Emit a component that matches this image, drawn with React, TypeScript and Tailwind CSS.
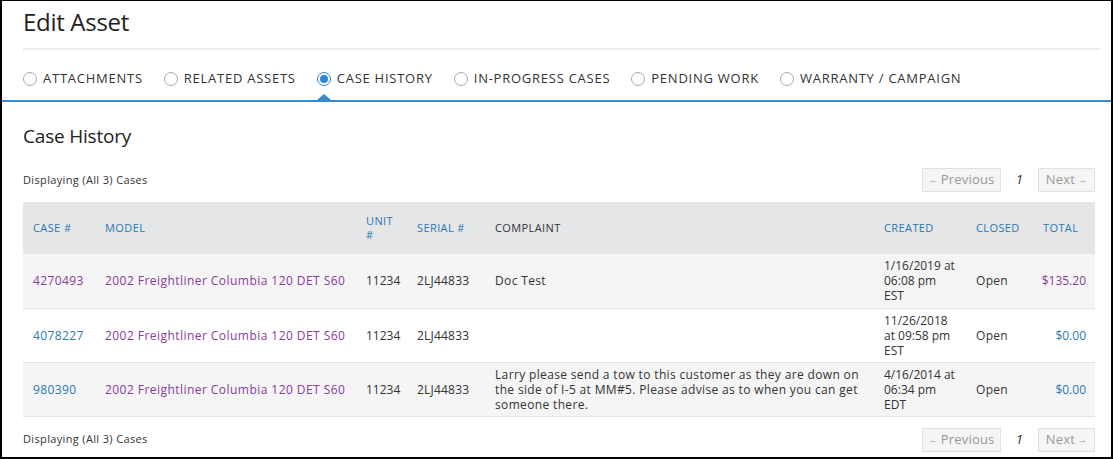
import React from "react";

const font = { fontFamily: '"Open Sans", "Noto Sans", sans-serif' };

function Radio({ checked }: { checked?: boolean }) {
  return checked ? (
    <span className="inline-flex h-[14px] w-[14px] items-center justify-center rounded-full border border-[#2d86d6] bg-white">
      <span className="h-[8px] w-[8px] rounded-full bg-[#2d86d6]" />
    </span>
  ) : (
    <span className="inline-block h-[14px] w-[14px] rounded-full border border-[#a9a9a9] bg-white" />
  );
}

function Pager() {
  return (
    <div className="flex items-center text-[13px] tracking-[0.2px]">
      <div className="flex h-[24px] w-[79px] items-center justify-center border border-[#e2e2e2] bg-[#f5f5f5] text-[#999]">
        <span className="mr-[3px] text-[9px]">←</span>Previous
      </div>
      <div className="w-[37px] text-center italic text-[#333]">1</div>
      <div className="flex h-[24px] w-[57px] items-center justify-center border border-[#e2e2e2] bg-[#f5f5f5] text-[#999]">
        Next<span className="ml-[3px] text-[9px]">→</span>
      </div>
    </div>
  );
}

const tabs = [
  "ATTACHMENTS",
  "RELATED ASSETS",
  "CASE HISTORY",
  "IN-PROGRESS CASES",
  "PENDING WORK",
  "WARRANTY / CAMPAIGN",
];

type Row = {
  caseNo: string;
  caseVisited: boolean;
  model: string;
  unit: string;
  serial: string;
  complaint: string[];
  created: string[];
  closed: string;
  total: string;
  totalVisited: boolean;
  bg: string;
};

const rows: Row[] = [
  {
    caseNo: "4270493",
    caseVisited: true,
    model: "2002 Freightliner Columbia 120 DET S60",
    unit: "11234",
    serial: "2LJ44833",
    complaint: ["Doc Test"],
    created: ["1/16/2019 at", "06:08 pm", "EST"],
    closed: "Open",
    total: "$135.20",
    totalVisited: true,
    bg: "bg-[#f5f5f5]",
  },
  {
    caseNo: "4078227",
    caseVisited: false,
    model: "2002 Freightliner Columbia 120 DET S60",
    unit: "11234",
    serial: "2LJ44833",
    complaint: [],
    created: ["11/26/2018", "at 09:58 pm", "EST"],
    closed: "Open",
    total: "$0.00",
    totalVisited: false,
    bg: "bg-white",
  },
  {
    caseNo: "980390",
    caseVisited: false,
    model: "2002 Freightliner Columbia 120 DET S60",
    unit: "11234",
    serial: "2LJ44833",
    complaint: [
      "Larry please send a tow to this customer as they are down on",
      "the side of I-5 at MM#5. Please advise as to when you can get",
      "someone there.",
    ],
    created: ["4/16/2014 at", "06:34 pm", "EDT"],
    closed: "Open",
    total: "$0.00",
    totalVisited: false,
    bg: "bg-[#f5f5f5]",
  },
];

const purple = "text-[#8a3a9c]";
const blue = "text-[#2b78b3]";

export default function App() {
  return (
    <div
      style={font}
      className="h-[459px] w-[1113px] overflow-hidden border-t border-l-2 border-r-2 border-b-2 border-black bg-white text-[#333]"
    >
      <div className="px-[21px]">
        <div className="pt-[6px] text-[24px] font-normal leading-[30px] tracking-[-0.3px] text-[#222]">
          Edit Asset
        </div>
        <div className="mt-[11px] h-[2px] w-[1077px] bg-[#ededed]" />
      </div>
      <div className="flex h-[50px] items-center pl-[21px] pt-[7px] text-[13px] tracking-[0.75px] text-[#333]">
        {tabs.map((t, i) => (
          <div key={t} className={`flex items-center gap-[6px] ${i < tabs.length - 1 ? "mr-[21px]" : ""}`}>
            <Radio checked={i === 2} />
            <span>{t}</span>
          </div>
        ))}
      </div>
      <div className="relative h-[2px] bg-[#3a8ad1]">
        <div className="absolute bottom-[2px] left-[315px] h-0 w-0 border-x-[7px] border-b-[6px] border-x-transparent border-b-[#3a8ad1]" />
      </div>
      <div className="px-[21px]">
        <div className="pt-[22px] text-[19px] leading-[24px] tracking-[-0.2px] text-[#222]">Case History</div>
        <div className="mt-[20px] flex w-[1072px] items-center justify-between">
          <div className="text-[11px] tracking-[0.35px]">Displaying (All 3) Cases</div>
          <Pager />
        </div>
        <table className="mt-[10px] w-[1072px] border-collapse text-[12px] leading-[15px]">
          <colgroup>
            <col className="w-[72px]" />
            <col className="w-[261px]" />
            <col className="w-[51px]" />
            <col className="w-[78px]" />
            <col className="w-[389px]" />
            <col className="w-[92px]" />
            <col className="w-[67px]" />
            <col className="w-[62px]" />
          </colgroup>
          <thead>
            <tr className="h-[52px] bg-[#e5e6e8] text-left text-[11px] font-normal leading-[14px] tracking-[0.4px]">
              <th className={`pl-[10px] font-normal ${blue}`}>CASE #</th>
              <th className={`pl-[10px] font-normal ${blue}`}>MODEL</th>
              <th className={`pl-[10px] font-normal ${blue}`}>
                UNIT
                <br />#
              </th>
              <th className={`pl-[10px] font-normal ${blue}`}>SERIAL #</th>
              <th className="pl-[10px] font-normal text-[#333]">COMPLAINT</th>
              <th className={`pl-[10px] font-normal ${blue}`}>CREATED</th>
              <th className={`pl-[10px] font-normal ${blue}`}>CLOSED</th>
              <th className={`pl-[10px] font-normal ${blue}`}>TOTAL</th>
            </tr>
          </thead>
          <tbody>
            {rows.map((r) => (
              <tr key={r.caseNo} className={`h-[54px] border-b border-[#e3e3e3] ${r.bg}`}>
                <td className={`pl-[10px] tracking-[0.4px] ${r.caseVisited ? purple : blue}`}>{r.caseNo}</td>
                <td className={`whitespace-nowrap pl-[10px] tracking-[0.45px] ${purple}`}>{r.model}</td>
                <td className="pl-[10px]">{r.unit}</td>
                <td className="pl-[10px] tracking-[0.2px]">{r.serial}</td>
                <td className="whitespace-nowrap pl-[10px] tracking-[0.35px]">
                  {r.complaint.map((l, i) => (
                    <div key={i}>{l}</div>
                  ))}
                </td>
                <td className="whitespace-nowrap pl-[10px]">
                  {r.created.map((l, i) => (
                    <div key={i}>{l}</div>
                  ))}
                </td>
                <td className="pl-[10px] tracking-[0.3px]">{r.closed}</td>
                <td className={`pr-[9px] text-right ${r.totalVisited ? purple : blue}`}>{r.total}</td>
              </tr>
            ))}
          </tbody>
        </table>
        <div className="mt-[11px] flex w-[1072px] items-center justify-between">
          <div className="text-[11px] tracking-[0.35px]">Displaying (All 3) Cases</div>
          <Pager />
        </div>
      </div>
    </div>
  );
}
